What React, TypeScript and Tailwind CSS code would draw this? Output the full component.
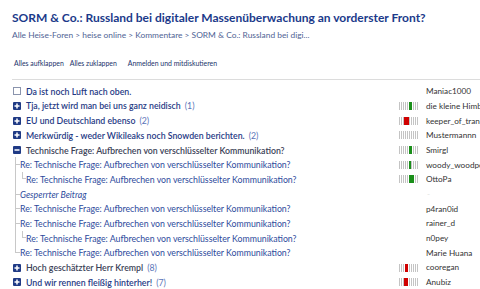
import React from "react";

type Rating = { color: "green" | "red"; left: number; width: number } | null;

type Thread = {
  kind: "top";
  title: string;
  count?: number;
  icon: "empty" | "plus" | "minus";
  muted?: boolean;
  author: string;
  rating?: Rating;
  showBar?: boolean;
};

type Reply = {
  kind: "reply";
  title: string;
  level: 1 | 2;
  locked?: boolean;
  last?: boolean;
  author: string;
  rating?: Rating;
  showBar?: boolean;
};

const RE = "Re: Technische Frage: Aufbrechen von verschlüsselter Kommunikation?";

const rows: (Thread | Reply)[] = [
  { kind: "top", icon: "empty", title: "Da ist noch Luft nach oben.", author: "Maniac1000" },
  { kind: "top", icon: "plus", title: "Tja, jetzt wird man bei uns ganz neidisch", count: 1, author: "die kleine Himbeere", showBar: true, rating: { color: "green", left: 10, width: 3 } },
  { kind: "top", icon: "plus", title: "EU und Deutschland ebenso", count: 2, author: "keeper_of_transparency", showBar: true, rating: { color: "red", left: 5, width: 5 } },
  { kind: "top", icon: "plus", title: "Merkwürdig - weder Wikileaks noch Snowden berichten.", count: 2, author: "Mustermannn", showBar: true, rating: null },
  { kind: "top", icon: "minus", muted: true, title: "Technische Frage: Aufbrechen von verschlüsselter Kommunikation?", author: "Smirgl", showBar: true, rating: { color: "green", left: 10, width: 3 } },
  { kind: "reply", level: 1, title: RE, author: "woody_woodpecker", showBar: true, rating: { color: "green", left: 10, width: 2 } },
  { kind: "reply", level: 2, title: RE, author: "OttoPa", showBar: true, rating: { color: "green", left: 10, width: 5 } },
  { kind: "reply", level: 1, locked: true, title: "Gesperrter Beitrag", author: "" },
  { kind: "reply", level: 1, title: RE, author: "p4ran0id" },
  { kind: "reply", level: 1, title: RE, author: "rainer_d" },
  { kind: "reply", level: 2, title: RE, author: "n0pey" },
  { kind: "reply", level: 1, last: true, title: RE, author: "Marie Huana" },
  { kind: "top", icon: "plus", muted: true, title: "Hoch geschätzter Herr Krempl", count: 8, author: "cooregan", showBar: true, rating: { color: "red", left: 6, width: 3 } },
  { kind: "top", icon: "plus", title: "Und wir rennen fleißig hinterher!", count: 7, author: "Anubiz", showBar: true, rating: { color: "red", left: 5, width: 4 } },
];

function Icon({ type }: { type: "empty" | "plus" | "minus" }) {
  if (type === "empty") {
    return <span className="inline-block h-[8px] w-[8px] shrink-0 border border-[#8a94ad] bg-white" />;
  }
  return (
    <svg width="8" height="8" viewBox="0 0 8 8" className="shrink-0">
      <rect x="0" y="0" width="8" height="8" rx="1" fill="#1f3a85" />
      <rect x="1.5" y="3.25" width="5" height="1.5" fill="#fff" />
      {type === "plus" && <rect x="3.25" y="1.5" width="1.5" height="5" fill="#fff" />}
    </svg>
  );
}

function Bar({ rating }: { rating: Rating }) {
  return (
    <span className="relative flex h-[8px] w-[20px] gap-px">
      {Array.from({ length: 10 }).map((_, i) => (
        <span key={i} className="h-full w-px bg-[#c4c4c4]" />
      ))}
      {rating && (
        <span
          className={rating.color === "green" ? "absolute top-0 h-full bg-[#1a8f1a]" : "absolute top-0 h-full bg-[#d00000]"}
          style={{ left: rating.left, width: rating.width }}
        />
      )}
    </span>
  );
}

function Row({ r }: { r: Thread | Reply }) {
  return (
    <div className="flex h-[14.7px] items-center">
      <div className="flex h-full w-[387px] shrink-0 items-center overflow-hidden whitespace-nowrap">
        {r.kind === "top" ? (
          <div className="flex items-center gap-[5px] pl-[1px]">
            <Icon type={r.icon} />
            <span className={r.muted ? "font-semibold text-[#3b4257]" : "font-semibold text-[#1f3a85]"}>{r.title}</span>
            {r.count !== undefined && <span className="-ml-[1px] text-[#5a74b8]">({r.count})</span>}
          </div>
        ) : (
          <div className="relative flex h-full items-center pl-[4px]">
            <span
              className={
                r.last
                  ? "absolute left-[3px] top-0 h-1/2 w-px bg-[#c8c8c8]"
                  : "absolute left-[3px] top-0 h-full w-px bg-[#c8c8c8]"
              }
            />
            {r.level === 2 ? (
              <>
                <span className="ml-[6px] h-[7px] w-[4px] self-start border-b border-l border-[#c8c8c8]" />
                <span className="text-[#2d4a9c]">{r.title}</span>
              </>
            ) : (
              <>
                <span className="h-px w-[4px] bg-[#c8c8c8]" />
                <span className={r.locked ? "italic text-[#2d4a9c]" : "text-[#2d4a9c]"}>{r.title}</span>
              </>
            )}
          </div>
        )}
      </div>
      <div className="flex w-[27px] shrink-0 items-center">{r.showBar && <Bar rating={r.rating ?? null} />}</div>
      {r.author ? (
        <div className="whitespace-nowrap text-[8.2px] text-[#333]">{r.author}</div>
      ) : (
        <div className="pl-[1px] text-[8.2px] text-[#e2e2e2]">-</div>
      )}
    </div>
  );
}

export default function App() {
  return (
    <div
      className="h-[289px] w-[480px] overflow-hidden bg-white"
      style={{ fontFamily: '"Lato", "Noto Sans", sans-serif' }}
    >
      <div className="pl-3 pt-[8px]">
        <h1 className="whitespace-nowrap text-[12px] font-bold leading-[20px] text-[#1b3a8a]">
          SORM &amp; Co.: Russland bei digitaler Massenüberwachung an vorderster Front?
        </h1>
        <div className="mt-[1px] whitespace-nowrap text-[8.4px] leading-[12px] text-[#4f6394]">
          Alle Heise-Foren &gt; heise online &gt; Kommentare &gt; SORM &amp; Co.: Russland bei digi...
        </div>
        <div className="mt-[16px] flex items-center pl-[2px] text-[6.9px] leading-[12px] text-[#22336b]">
          <span>Alles aufklappen</span>
          <span className="ml-[6px]">Alles zuklappen</span>
          <span className="ml-[11px]">Anmelden und mitdiskutieren</span>
        </div>
      </div>
      <div className="ml-3 mt-[10px] h-px bg-[#dcdcdc]" />
      <div className="pl-3 pt-[4px] text-[8.75px]">
        {rows.map((r, i) => (
          <Row key={i} r={r} />
        ))}
      </div>
    </div>
  );
}
